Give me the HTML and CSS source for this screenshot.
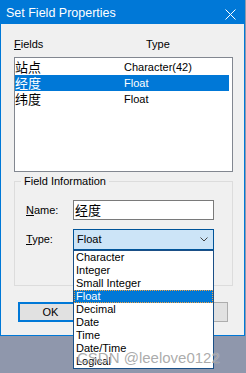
FILE: index.html
```html
<!DOCTYPE html>
<html lang="zh">
  <head>
    <meta charset="UTF-8" />
    <title>Set Field Properties</title>
    <link rel="stylesheet" href="styles.css">
  </head>
  <body>
    <div class="window">
      <div class="titlebar">
        <span class="title">Set Field Properties</span>
        <svg class="close" width="11" height="11" viewBox="0 0 11 11">
          <path d="M0.5 0.5 L10.5 10.5 M10.5 0.5 L0.5 10.5" stroke="#fff" stroke-width="1" fill="none" />
        </svg>
      </div>

      <div class="dialog">
        <div class="cols">
          <span class="col-name"><u>F</u>ields</span>
          <span class="col-type">Type</span>
        </div>

        <div class="listbox">
          <div class="row">
            <span class="cell-name cjk">站点</span>
            <span class="cell-type">Character(42)</span>
          </div>
          <div class="row selected">
            <span class="cell-name cjk">经度</span>
            <span class="cell-type">Float</span>
          </div>
          <div class="row">
            <span class="cell-name cjk">纬度</span>
            <span class="cell-type">Float</span>
          </div>
        </div>

        <fieldset class="group">
          <legend>Field Information</legend>
          <div class="field">
            <label><u>N</u>ame:</label>
            <div class="input cjk">经度</div>
          </div>
          <div class="field field-type">
            <label><u>T</u>ype:</label>
            <div class="select">
              <span>Float</span>
              <svg class="chevron" width="8" height="5" viewBox="0 0 8 5">
                <path d="M0.5 0.5 L4 4 L7.5 0.5" stroke="#444" stroke-width="1" fill="none" />
              </svg>
            </div>
          </div>
        </fieldset>

        <div class="buttons">
          <button class="btn btn-default">OK</button>
          <button class="btn">Cancel</button>
        </div>
      </div>
    </div>

    <!-- 下拉列表弹出层 -->
    <ul class="dropdown">
      <li>Character</li>
      <li>Integer</li>
      <li>Small Integer</li>
      <li class="current">Float</li>
      <li>Decimal</li>
      <li>Date</li>
      <li>Time</li>
      <li>Date/Time</li>
      <li>Logical</li>
    </ul>

    <div class="watermark">CSDN @leelove0122</div>
  </body>
</html>
```

FILE: styles.css
```css
body {
  margin: 0;
  background: #8f97ac;
  font-family: "Liberation Sans", "Noto Sans CJK SC", sans-serif;
  font-size: 11px;
  line-height: 13px;
  color: #000;
}

.cjk {
  font-family: "Noto Sans CJK SC", sans-serif;
  font-size: 13px;
}

/* 窗口 */
.window {
  width: 245px;
  box-sizing: border-box;
  background: #f0f0f0;
  border: 1px solid #0078d7;
  border-top: 0;
}

.titlebar {
  height: 24px;
  margin: 0 -1px;
  background: #0078d7;
  color: #fff;
  display: flex;
  justify-content: space-between;
  align-items: flex-start;
  padding: 6px 9px 0 6px;
  box-sizing: border-box;
}
.title {
  font-size: 12.5px;
  line-height: 15px;
}
.close {
  margin-top: 3px;
}

.dialog {
  padding: 14px 11px 13px 13px;
}

/* 字段列表 */
.cols {
  display: flex;
  height: 13px;
}
.col-name {
  width: 132px;
}

.listbox {
  margin-top: 6px;
  height: 115px;
  box-sizing: border-box;
  border: 1px solid #828790;
  background: #fff;
  padding: 1px 3px 1px 0;
}
.row {
  display: flex;
  align-items: center;
  height: 16px;
  line-height: 16px;
}
.row.selected {
  background: #0078d7;
  color: #fff;
}
.cell-name {
  width: 109px;
}

/* 字段信息 */
.group {
  margin: 3px 0 0;
  padding: 0 0 35px;
  border: 1px solid #dcdcdc;
  min-width: 0;
}
.group legend {
  margin-left: 6px;
  padding: 0 3px;
  line-height: 13px;
}

.field {
  display: flex;
  align-items: center;
  padding-left: 11px;
  margin-top: 12px;
}
.field-type {
  margin-top: 9px;
}
.field label {
  width: 47px;
}

.input {
  width: 141px;
  height: 20px;
  box-sizing: border-box;
  border: 1px solid #7a7a7a;
  background: #fff;
  padding-left: 1px;
  line-height: 18px;
}

.select {
  width: 141px;
  height: 21px;
  box-sizing: border-box;
  border: 1px solid #005499;
  background: #cce4f7;
  display: flex;
  align-items: center;
  justify-content: space-between;
  padding: 0 5px 0 3px;
}

/* 弹出的类型列表 */
.dropdown {
  position: absolute;
  left: 73px;
  top: 250px;
  width: 141px;
  box-sizing: border-box;
  margin: 0;
  padding: 0;
  list-style: none;
  background: #fff;
  border: 1px solid #1b4f86;
}
.dropdown li {
  height: 13px;
  line-height: 13px;
  padding-left: 2px;
}
.dropdown li.current {
  background: #0078d7;
  color: #fff;
  outline: 1px dotted #f0a040;
  outline-offset: -1px;
}

/* 按钮 */
.buttons {
  display: flex;
  justify-content: space-between;
  margin-top: 16px;
  padding: 0 5px 0 4px;
}
.btn {
  width: 65px;
  height: 20px;
  box-sizing: border-box;
  border: 1px solid #adadad;
  background: #e1e1e1;
  font: inherit;
  padding: 0;
}
.btn-default {
  border: 2px solid #0078d7;
}

.watermark {
  position: absolute;
  left: 77px;
  top: 349px;
  font-size: 15px;
  line-height: 17px;
  color: rgba(150, 150, 150, 0.8);
  text-shadow: 0 0 1px rgba(255, 255, 255, 0.7);
}
```
